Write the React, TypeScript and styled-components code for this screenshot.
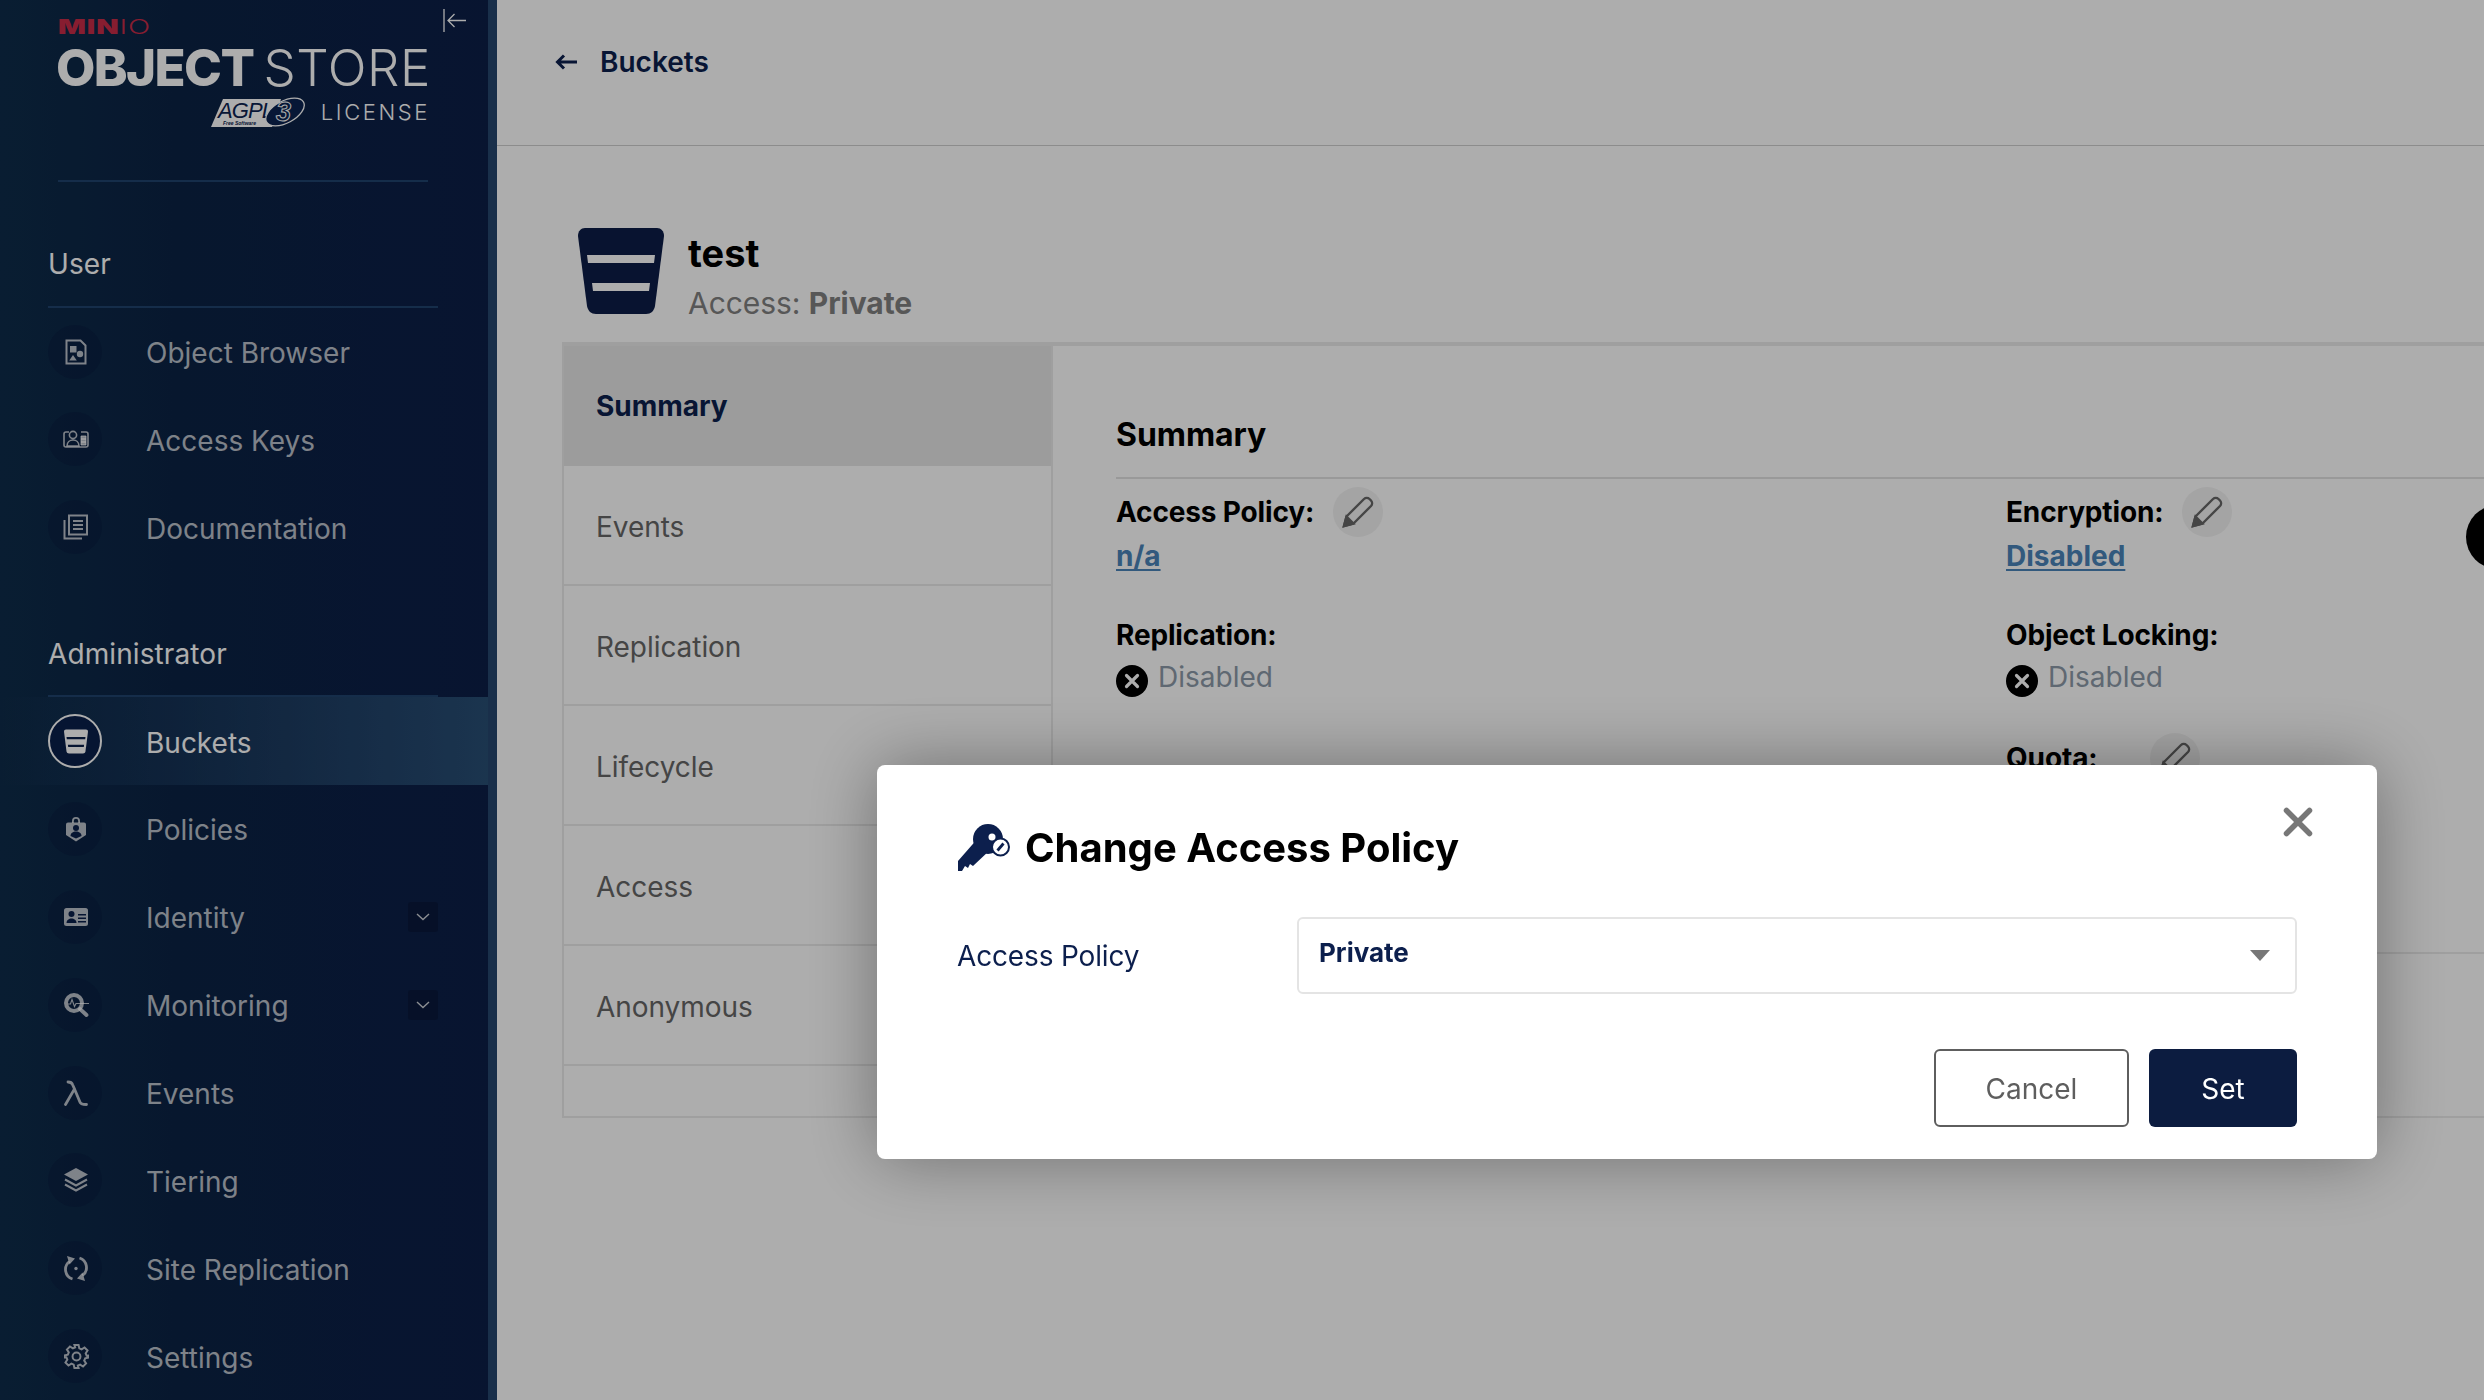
import React from "react";
import styled, { createGlobalStyle } from "styled-components";

const Global = createGlobalStyle`
  html, body { margin: 0; padding: 0; background: #fff; }
  body { font-family: Inter, "Liberation Sans", sans-serif; color: #000; overflow: hidden; }
  * { box-sizing: border-box; }
`;

const Page = styled.div`
  display: flex;
  width: 2484px;
  height: 1400px;
  overflow: hidden;
`;

const Sidebar = styled.aside`
  display: flex;
  flex: 0 0 497px;
  height: 1400px;
  background: linear-gradient(90deg, #0e2c4a 0%, #0b2345 35%, #0c1e48 100%);
`;
const SideBody = styled.div`
  width: 488px;
  display: flex;
  flex-direction: column;
`;
const Strip = styled.div`
  flex: 1;
  background: #25466e;
`;
const LogoRow = styled.div`
  display: flex;
  gap: 15px;
  padding-left: 58px;
  height: 180px;
`;
const Logo = styled.div`
  width: 370px;
  padding-top: 15px;
  display: flex;
  flex-direction: column;
  color: #fff;
`;
const Brand = styled.div`
  font-size: 20px;
  line-height: 24px;
  letter-spacing: 0.6px;
  color: #c72c48;
  font-weight: 900;
  padding-left: 0;
  transform-origin: left;
  transform: scaleX(1.46);
  span { font-weight: 300; }
`;
const Product = styled.div`
  display: flex;
  justify-content: space-between;
  font-size: 51px;
  line-height: 50px;
  margin: 4px -3px 0 -2px;
  white-space: nowrap;
`;
const ProductBold = styled.span`
  font-weight: 800;
  letter-spacing: -1.6px;
`;
const ProductLight = styled.span`
  font-weight: 300;
  letter-spacing: 0.6px;
`;
const LicenseRow = styled.div`
  display: flex;
  justify-content: flex-end;
  align-items: center;
  gap: 16px;
  margin-top: 4px;
`;
const License = styled.span`
  font-size: 22px;
  font-weight: 300;
  letter-spacing: 2.6px;
  margin-right: -2px;
  margin-top: -2px;
`;
const Collapse = styled.div`
  padding-top: 9px;
  color: #fff;
  line-height: 0;
`;
const SideDivider = styled.div`
  margin-left: 58px;
  width: 370px;
  height: 2px;
  background: #20436e;
`;
const SectionLabel = styled.div<{ $lower?: boolean }>`
  margin-left: 48px;
  width: 390px;
  padding: ${(p) => (p.$lower ? "65px 0 23px" : "64px 0 24px")};
  font-size: 28px;
  line-height: 36px;
  font-weight: 400;
  color: #fff;
  border-bottom: 2px solid #20436e;
  letter-spacing: 0.1px;
`;
const Item = styled.div<{ $active?: boolean }>`
  height: 88px;
  display: flex;
  align-items: center;
  padding-left: 48px;
  gap: 44px;
  font-size: 28px;
  color: ${(p) => (p.$active ? "#fff" : "rgba(255,255,255,.72)")};
  background: ${(p) =>
    p.$active ? "linear-gradient(90deg, rgba(40,78,116,0) 0%, #284e74 100%)" : "transparent"};
`;
const ItemText = styled.span`
  padding-top: 3px;
`;
const IconCircle = styled.span<{ $active?: boolean }>`
  flex: 0 0 54px;
  height: 54px;
  border-radius: 50%;
  display: flex;
  align-items: center;
  justify-content: center;
  padding-left: 2px;
  color: ${(p) => (p.$active ? "#fff" : "rgba(255,255,255,.72)")};
  background: ${(p) => (p.$active ? "#0a1f4a" : "rgba(8,24,60,.38)")};
  border: ${(p) => (p.$active ? "2px solid #fff" : "none")};
`;
const Chevron = styled.span`
  margin-left: auto;
  margin-right: 50px;
  width: 30px;
  height: 30px;
  border-radius: 3px;
  background: rgba(6, 18, 46, 0.45);
  display: flex;
  align-items: center;
  justify-content: center;
  color: rgba(255, 255, 255, 0.8);
`;

const Main = styled.main`
  flex: 1;
  min-width: 0;
  display: flex;
  flex-direction: column;
  background: #fff;
`;
const TopBar = styled.div`
  height: 146px;
  flex: 0 0 146px;
  border-bottom: 1px solid #cfcfcf;
  display: flex;
  align-items: center;
  gap: 23px;
  padding: 0 0 22px 58px;
  color: #0c1f4d;
  font-size: 28px;
  font-weight: 600;
`;
const Body = styled.div`
  padding: 82px 0 0 65px;
  flex: 1;
`;
const Header = styled.div`
  height: 114px;
  display: flex;
  gap: 24px;
  padding-left: 16px;
`;
const HeaderText = styled.div`
  padding-top: 3px;
`;
const BucketName = styled.div`
  font-size: 38px;
  line-height: 44px;
  font-weight: 700;
  color: #000;
`;
const AccessLine = styled.div`
  font-size: 30px;
  line-height: 40px;
  margin-top: 8px;
  color: #808080;
  font-weight: 400;
  letter-spacing: -0.05px;
  b { font-weight: 700; color: #808080; }
`;
const Panel = styled.div`
  display: flex;
  height: 776px;
  border-top: 4px solid #eaeaea;
  border-bottom: 2px solid #eaeaea;
`;
const Nav = styled.nav`
  flex: 0 0 491px;
  border-left: 2px solid #eaeaea;
  border-right: 2px solid #eaeaea;
`;
const NavItem = styled.div<{ $active?: boolean }>`
  height: 120px;
  display: flex;
  align-items: center;
  padding-left: 32px;
  padding-top: ${(p) => (p.$active ? 0 : 3)}px;
  font-size: 28px;
  letter-spacing: -0.05px;
  color: ${(p) => (p.$active ? "#0c1f4d" : "#666")};
  font-weight: ${(p) => (p.$active ? 700 : 400)};
  background: ${(p) => (p.$active ? "#e6e6e6" : "transparent")};
  border-bottom: ${(p) => (p.$active ? "none" : "2px solid #eaeaea")};
`;
const Content = styled.section`
  flex: 1;
  display: flex;
  flex-direction: column;
  padding-left: 63px;
  overflow: hidden;
  position: relative;
`;
const SummaryHead = styled.h2`
  margin: 0;
  height: 133px;
  flex: 0 0 133px;
  padding-top: 69px;
  font-size: 32px;
  line-height: 40px;
  font-weight: 700;
  letter-spacing: -0.05px;
  border-bottom: 2px solid #e2e2e2;
`;
const Grid = styled.div`
  display: grid;
  grid-template-columns: 890px 1fr;
  grid-auto-rows: 123px;
  height: 473px;
  flex: 0 0 473px;
  padding-top: 8px;
`;
const Field = styled.div``;
const Label = styled.div<{ $gap?: number }>`
  display: flex;
  align-items: center;
  gap: ${(p) => p.$gap ?? 19}px;
  font-size: 28px;
  font-weight: 700;
  line-height: 50px;
  height: 50px;
  letter-spacing: -0.15px;
`;
const Pencil = styled.span`
  width: 50px;
  height: 50px;
  border-radius: 50%;
  background: #f2f2f2;
  display: flex;
  align-items: center;
  justify-content: center;
  color: #666;
`;
const LinkValue = styled.a`
  display: block;
  font-size: 28px;
  font-weight: 700;
  line-height: 38px;
  margin-top: 0;
  color: #4a84b8;
  text-decoration: underline;
  text-underline-offset: 3px;
`;
const StatusValue = styled.div`
  display: flex;
  align-items: flex-start;
  gap: 10px;
  font-size: 28px;
  color: #8c9aa8;
  line-height: 36px;
  margin-top: -1px;
`;
const StatusIcon = styled.span`
  display: flex;
  margin-top: 6px;
`;
const ContentRule = styled.div`
  margin-left: -63px;
  border-top: 2px solid #eaeaea;
`;
const EdgeDot = styled.div`
  position: absolute;
  left: 1413px;
  top: 159px;
  width: 64px;
  height: 64px;
  border-radius: 50%;
  background: #000;
`;

const Overlay = styled.div`
  position: fixed;
  inset: 0;
  background: rgba(0, 0, 0, 0.32);
  padding: 765px 107px 0 877px;
`;
const Modal = styled.div`
  position: relative;
  width: 1500px;
  height: 394px;
  background: #fff;
  border-radius: 8px;
  padding: 59px 80px 32px 81px;
  box-shadow: 0 0 70px rgba(0, 0, 0, 0.36);
  display: flex;
  flex-direction: column;
`;
const ModalTitle = styled.div`
  display: flex;
  align-items: center;
  gap: 15px;
  height: 47px;
  font-size: 40px;
  font-weight: 700;
`;
const Close = styled.span`
  position: absolute;
  right: 64px;
  top: 42px;
  color: #777;
  display: flex;
`;
const FormRow = styled.div`
  display: grid;
  grid-template-columns: 339px 1fr;
  align-items: center;
  margin-top: 46px;
`;
const FormLabel = styled.label`
  font-size: 28px;
  color: #0c1f4d;
  margin-left: -1px;
  letter-spacing: -0.15px;
`;
const Select = styled.div`
  height: 77px;
  border: 2px solid #e4e4e4;
  border-radius: 6px;
  display: flex;
  align-items: center;
  justify-content: space-between;
  padding: 0 25px 6px 20px;
  font-size: 26px;
  font-weight: 700;
  color: #0c1f4d;
`;
const Caret = styled.span`
  width: 0;
  height: 0;
  margin-top: 6px;
  border-left: 10px solid transparent;
  border-right: 10px solid transparent;
  border-top: 11px solid #777;
`;
const Actions = styled.div`
  display: flex;
  justify-content: flex-end;
  gap: 20px;
  margin-top: 55px;
`;
const Button = styled.button<{ $primary?: boolean }>`
  width: ${(p) => (p.$primary ? "148px" : "195px")};
  height: 78px;
  border-radius: 6px;
  padding: 2px 0 0;
  font-family: inherit;
  font-size: 28px;
  font-weight: 400;
  color: ${(p) => (p.$primary ? "#fff" : "#5e5e5e")};
  background: ${(p) => (p.$primary ? "#0c1c40" : "#fff")};
  border: ${(p) => (p.$primary ? "none" : "2px solid #5e5e5e")};
`;
const BigBucket = styled.span`
  color: #0c1c47;
  display: flex;
  align-self: flex-start;
`;

const BucketGlyph = ({ w, h, slit }: { w: number; h: number; slit: string }) => (
  <svg width={w} height={h} viewBox="0 0 86 86">
    <path
      d="M7 0h72c4 0 7 3 7 8l-9 70c-1 5-4 8-9 8H18c-5 0-8-3-9-8L0 8c0-5 3-8 7-8z"
      fill="currentColor"
    />
    <path d="M9 27h68l-1 8H10zM14 55h58l-1 8H15z" fill={slit} />
  </svg>
);

const icons: Record<string, React.ReactNode> = {
  browser: (
    <svg width="22" height="26" viewBox="0 0 22 26" fill="none">
      <path d="M1.500 1.500h14l5 5v18h-19z" stroke="currentColor" strokeWidth="2" />
      <rect x="5" y="7" width="6.500" height="6.500" fill="currentColor" />
      <circle cx="15" cy="15" r="3.200" fill="currentColor" />
      <path d="M8 16l3.800 5.500H4.200z" fill="currentColor" />
    </svg>
  ),
  keys: (
    <svg width="26" height="20" viewBox="0 0 26 20" fill="none" stroke="currentColor" strokeWidth="1.600">
      <path d="M6 3H3a2 2 0 0 0-2 2v11a2 2 0 0 0 2 2h20a2 2 0 0 0 2-2V5a2 2 0 0 0-2-2h-5" />
      <circle cx="10" cy="6" r="3.600" />
      <path d="M4 17c0-4 3-6 6-6s6 2 6 6z" />
      <path d="M18 7h5v3h-5zM18 10h5v3h-5zM18 13h5v3h-5z" strokeWidth="1" fill="currentColor" />
    </svg>
  ),
  docs: (
    <svg width="26" height="26" viewBox="0 0 26 26" fill="none" stroke="currentColor" strokeWidth="2">
      <rect x="6" y="1.500" width="18" height="19" />
      <path d="M10 7h10M10 11h10M10 15h10" />
      <path d="M1.500 6v18.500H19" />
    </svg>
  ),
  bucket: <BucketGlyph w={24} h={25} slit="#0a1f4a" />,
  policies: (
    <svg width="20" height="26" viewBox="0 0 20 26">
      <path d="M6 7V5a4 4 0 0 1 8 0v2h-1.800V5a2.200 2.200 0 0 0-4.400 0v2z" fill="currentColor" />
      <path d="M2 6.500h16a2 2 0 0 1 2 2V19l-10 6.500L0 19V8.500a2 2 0 0 1 2-2z" fill="currentColor" />
      <circle cx="10" cy="12" r="3" fill="#0a1f4a" />
      <path d="M4.500 20c0-3 2.500-4.500 5.500-4.500s5.500 1.500 5.500 4.500L10 22.500z" fill="#0a1f4a" />
    </svg>
  ),
  identity: (
    <svg width="24" height="18" viewBox="0 0 24 18">
      <rect width="24" height="18" rx="2.500" fill="currentColor" />
      <circle cx="7.500" cy="6" r="3" fill="#0a1f4a" />
      <path d="M2.500 15c0-3 2.500-4.500 5-4.500s5 1.500 5 4.500z" fill="#0a1f4a" />
      <path d="M14 6h8v1.500h-8zM14 9.500h8V11h-8zM14 13h8v1.500h-8z" fill="#0a1f4a" />
    </svg>
  ),
  monitoring: (
    <svg width="25" height="24" viewBox="0 0 25 24" fill="none">
      <circle cx="10" cy="10" r="8" stroke="currentColor" strokeWidth="4" />
      <path d="M16 16l6.500 6" stroke="currentColor" strokeWidth="3.800" strokeLinecap="round" />
      <path d="M4 11h2.500L8 6.500l2.500 7 1.500-3h13" stroke="currentColor" strokeWidth="1.100" />
    </svg>
  ),
  lambda: (
    <svg width="24" height="26" viewBox="0 0 24 26" fill="none">
      <path
        d="M1.500 24.500L10.500 9 8.500 4.500C8 3 7 2 4 2M10.500 9l5 12c.7 2.500 2 3.500 7 3.500"
        stroke="currentColor"
        strokeWidth="2.800"
        strokeLinecap="round"
      />
    </svg>
  ),
  tiering: (
    <svg width="24" height="25" viewBox="0 0 24 25">
      <path d="M12 0l12 6.500L12 13 0 6.500z" fill="currentColor" />
      <path d="M1 11.500l11 6 11-6M1 16.500l11 6 11-6" fill="none" stroke="currentColor" strokeWidth="2" />
    </svg>
  ),
  replication: (
    <svg width="24" height="25" viewBox="0 0 24 25" fill="none">
      <path d="M5.500 5.500a10 10 0 0 0 3 17.500" stroke="currentColor" strokeWidth="2.800" />
      <path d="M18.500 19.500a10 10 0 0 0-3-17.500" stroke="currentColor" strokeWidth="2.800" />
      <path d="M3 0l8 2.500-5.500 6zM21 25l-8-2.500 5.500-6z" fill="currentColor" />
      <circle cx="12" cy="12.500" r="1.700" fill="currentColor" />
    </svg>
  ),
  settings: (
    <svg width="25" height="25" viewBox="0 0 24 24" fill="none" stroke="currentColor" strokeWidth="1.900">
      <circle cx="12" cy="12" r="3.800" />
      <path d="M10 1h4l.7 3.200 2.200.9 2.800-1.800 2.900 2.900-1.800 2.800.9 2.200L23.500 11v2l-3.200.7-.9 2.200 1.800 2.800-2.900 2.900-2.800-1.800-2.200.9L14 23h-4l-.7-3.200-2.200-.9-2.800 1.800-2.900-2.900 1.800-2.800-.9-2.200L.5 13v-2l3.200-.7.9-2.200-1.800-2.800 2.900-2.900 2.800 1.800 2.200-.9z" />
    </svg>
  ),
};

const ChevronIcon = () => (
  <svg width="14" height="8" viewBox="0 0 14 8" fill="none" stroke="currentColor" strokeWidth="1.400">
    <path d="M1 1l6 5.500L13 1" />
  </svg>
);

const PencilIcon = () => (
  <svg width="32" height="32" viewBox="0 0 32 32" fill="none" stroke="currentColor" strokeWidth="2.400">
    <path d="M2 30l2.500-9.500L22 3a4 4 0 0 1 5.500 0l1.500 1.500a4 4 0 0 1 0 5.500L11.500 27.500z" />
    <path d="M2 30l2.500-9.500 7 7z" fill="currentColor" />
  </svg>
);

const XCircle = () => (
  <svg width="32" height="32" viewBox="0 0 32 32">
    <circle cx="16" cy="16" r="16" fill="#000" />
    <path d="M10.500 10.500l11 11M21.500 10.500l-11 11" stroke="#fff" strokeWidth="3.200" strokeLinecap="round" />
  </svg>
);

const KeyIcon = () => (
  <svg width="52" height="47" viewBox="0 0 52 47">
    <circle cx="30" cy="15" r="15" fill="#0c1f4d" />
    <path d="M0 37L21 13l11 13L15 42l-3-2-2 4-3-2-3 5H0z" fill="#0c1f4d" />
    <circle cx="34" cy="13" r="3.500" fill="#fff" />
    <circle cx="42.500" cy="23" r="8.500" fill="#fff" stroke="#0c1f4d" strokeWidth="2" />
    <path d="M39.500 26.500l6-7" stroke="#0c1f4d" strokeWidth="2.800" />
  </svg>
);

const AgplBadge = () => (
  <svg width="94" height="31" viewBox="0 0 94 31">
    <path d="M12 2h58l-9 28H0z" fill="#fff" />
    <text x="7" y="21" fontFamily="Liberation Sans, sans-serif" fontStyle="italic" fontSize="22" fill="#0b2350" textLength="56">
      AGPL
    </text>
    <text x="12" y="28" fontFamily="Liberation Sans, sans-serif" fontStyle="italic" fontWeight="700" fontSize="5" fill="#0b2350">
      Free Software
    </text>
    <ellipse cx="74" cy="15" rx="21" ry="11" transform="rotate(-28 74 15)" fill="#0b2350" stroke="#fff" strokeWidth="1.300" />
    <text x="65" y="24" fontFamily="Liberation Sans, sans-serif" fontStyle="italic" fontWeight="700" fontSize="27" fill="#0b2350" stroke="#fff" strokeWidth="1">
      3
    </text>
  </svg>
);

const userItems = [
  { key: "browser", label: "Object Browser" },
  { key: "keys", label: "Access Keys" },
  { key: "docs", label: "Documentation" },
];
const adminItems = [
  { key: "bucket", label: "Buckets", active: true },
  { key: "policies", label: "Policies" },
  { key: "identity", label: "Identity", more: true },
  { key: "monitoring", label: "Monitoring", more: true },
  { key: "lambda", label: "Events" },
  { key: "tiering", label: "Tiering" },
  { key: "replication", label: "Site Replication" },
  { key: "settings", label: "Settings" },
];

type MenuEntry = { key: string; label: string; active?: boolean; more?: boolean };

const MenuRow = ({ item }: { item: MenuEntry }) => (
  <Item $active={item.active}>
    <IconCircle $active={item.active}>{icons[item.key]}</IconCircle>
    <ItemText>{item.label}</ItemText>
    {item.more && (
      <Chevron>
        <ChevronIcon />
      </Chevron>
    )}
  </Item>
);

export default function App() {
  return (
    <>
      <Global />
      <Page>
        <Sidebar>
          <SideBody>
            <LogoRow>
              <Logo>
                <Brand>
                  MIN<span>IO</span>
                </Brand>
                <Product>
                  <ProductBold>OBJECT</ProductBold>
                  <ProductLight>STORE</ProductLight>
                </Product>
                <LicenseRow>
                  <AgplBadge />
                  <License>LICENSE</License>
                </LicenseRow>
              </Logo>
              <Collapse>
                <svg width="23" height="23" viewBox="0 0 23 23" fill="none" stroke="currentColor" strokeWidth="1.300">
                  <path d="M1 0v23M23 11.500H5M11.500 5L5 11.500l6.500 6.500" />
                </svg>
              </Collapse>
            </LogoRow>
            <SideDivider />
            <SectionLabel>User</SectionLabel>
            {userItems.map((it) => (
              <MenuRow key={it.label} item={it} />
            ))}
            <SectionLabel $lower>Administrator</SectionLabel>
            {adminItems.map((it) => (
              <MenuRow key={it.label} item={it} />
            ))}
          </SideBody>
          <Strip />
        </Sidebar>
        <Main>
          <TopBar>
            <svg width="22" height="16" viewBox="0 0 22 16" fill="none" stroke="currentColor" strokeWidth="3">
              <path d="M22 8H3M9 1.500L2.500 8 9 14.500" />
            </svg>
            Buckets
          </TopBar>
          <Body>
            <Header>
              <BigBucket>
                <BucketGlyph w={86} h={86} slit="#fff" />
              </BigBucket>
              <HeaderText>
                <BucketName>test</BucketName>
                <AccessLine>
                  Access: <b>Private</b>
                </AccessLine>
              </HeaderText>
            </Header>
            <Panel>
              <Nav>
                <NavItem $active>Summary</NavItem>
                <NavItem>Events</NavItem>
                <NavItem>Replication</NavItem>
                <NavItem>Lifecycle</NavItem>
                <NavItem>Access</NavItem>
                <NavItem>Anonymous</NavItem>
              </Nav>
              <Content>
                <SummaryHead>Summary</SummaryHead>
                <Grid>
                  <Field>
                    <Label>
                      Access Policy:
                      <Pencil>
                        <PencilIcon />
                      </Pencil>
                    </Label>
                    <LinkValue>n/a</LinkValue>
                  </Field>
                  <Field>
                    <Label>
                      Encryption:
                      <Pencil>
                        <PencilIcon />
                      </Pencil>
                    </Label>
                    <LinkValue>Disabled</LinkValue>
                  </Field>
                  <Field>
                    <Label>Replication:</Label>
                    <StatusValue>
                      <StatusIcon>
                        <XCircle />
                      </StatusIcon>
                      Disabled
                    </StatusValue>
                  </Field>
                  <Field>
                    <Label>Object Locking:</Label>
                    <StatusValue>
                      <StatusIcon>
                        <XCircle />
                      </StatusIcon>
                      Disabled
                    </StatusValue>
                  </Field>
                  <Field />
                  <Field>
                    <Label $gap={53}>
                      Quota:
                      <Pencil>
                        <PencilIcon />
                      </Pencil>
                    </Label>
                  </Field>
                </Grid>
                <ContentRule />
                <EdgeDot />
              </Content>
            </Panel>
          </Body>
        </Main>
      </Page>
      <Overlay>
        <Modal>
          <ModalTitle>
            <KeyIcon />
            Change Access Policy
          </ModalTitle>
          <Close>
            <svg width="30" height="30" viewBox="0 0 30 30" fill="none" stroke="currentColor" strokeWidth="5.500" strokeLinecap="round">
              <path d="M3.500 3.500l23 23M26.500 3.500l-23 23" />
            </svg>
          </Close>
          <FormRow>
            <FormLabel>Access Policy</FormLabel>
            <Select>
              Private
              <Caret />
            </Select>
          </FormRow>
          <Actions>
            <Button>Cancel</Button>
            <Button $primary>Set</Button>
          </Actions>
        </Modal>
      </Overlay>
    </>
  );
}
